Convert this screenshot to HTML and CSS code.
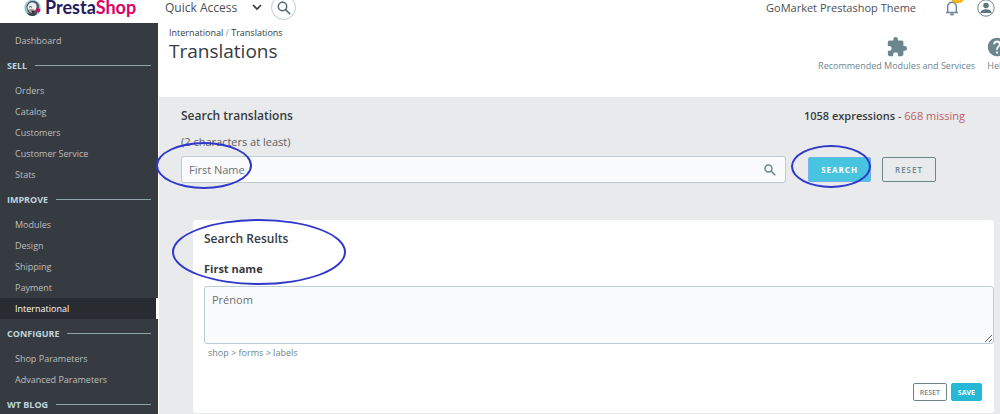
FILE: index.html
```html
<!DOCTYPE html>
<html lang="en">
<head>
    <meta charset="UTF-8">
    <meta name="viewport" content="width=device-width, initial-scale=1.0">
    <title>Translations - PrestaShop</title>
    <link rel="stylesheet" href="styles.css">
</head>
<body>

    <!-- Top bar -->
    <header class="topbar">
        <a href="#" class="logo">
            <svg width="17" height="18" viewBox="0 0 17 18">
                <circle cx="8.5" cy="9" r="8.2" fill="#8fc4d3"/>
                <path d="M2.500 8C3 3 7 1.500 10 2c3 .5 5 3 5 6l-2 6-6 2-3-3z" fill="#50535c"/>
                <path d="M3.500 8C4 4 7 3 9.500 3.500 12 4 13 6 12.500 9c-.5 2-2 3-4 3-3 0-5-1-5-4z" fill="#eceff1"/>
                <path d="M5 8.500c1-1.200 2-1.200 3 0" fill="none" stroke="#33353d"/>
                <path d="M4.500 10.500c2-1.500 5-1 7 1l-3 2.500c-2 0-4-1-4-3.500z" fill="#b9a093"/>
                <path d="M7 11.500l4 .5-2 2.500z" fill="#24262e"/>
                <path d="M13 8.500l3.500 2-1.500 3.500-3-2.500z" fill="#df0067"/>
                <path d="M3 14c3 1 8 1 10-.5 0 2-2 3.500-4.500 3.500S4 16 3 14z" fill="#3b3d46"/>
            </svg>
            <span class="logo-text">Presta<span class="logo-pink">Shop</span></span>
        </a>
        <button class="quick-access">
            Quick Access
            <svg width="10" height="7" viewBox="0 0 10 7" fill="none" stroke="#363a41" stroke-width="1.600"><path d="M1 1l4 4 4-4"/></svg>
        </button>
        <button class="round-search" aria-label="Search">
            <svg width="14" height="14" viewBox="0 0 14 14" fill="none" stroke="#4e6a74" stroke-width="1.500"><circle cx="5.500" cy="5.500" r="4.200"/><path d="M8.600 8.600l4.600 4.600"/></svg>
        </button>
        <a href="#" class="shop-name">GoMarket Prestashop Theme</a>
        <button class="bell" aria-label="Notifications">
            <svg width="14" height="17" viewBox="0 0 14 17" fill="none" stroke="#6c868e" stroke-width="1.400"><path d="M1 13.500h12M2.700 13V7.500a4.300 4.300 0 0 1 8.600 0V13"/><path d="M5.300 15.400h3.400" stroke-width="2"/></svg>
            <span class="badge">17</span>
        </button>
        <button class="user" aria-label="Account">
            <svg width="18" height="18" viewBox="0 0 18 18"><circle cx="9" cy="9" r="8.200" fill="#fff" stroke="#6c868e"/><circle cx="9" cy="6.500" r="2.800" fill="#5c7780"/><path d="M3.500 14c0-3 3.500-3.700 5.500-3.700s5.500.7 5.500 3.700z" fill="#5c7780"/></svg>
        </button>
    </header>

    <div class="layout">

        <!-- Sidebar -->
        <nav class="sidebar">
            <a href="#">Dashboard</a>
            <h2>SELL</h2>
            <a href="#">Orders</a>
            <a href="#">Catalog</a>
            <a href="#">Customers</a>
            <a href="#">Customer Service</a>
            <a href="#">Stats</a>
            <h2>IMPROVE</h2>
            <a href="#">Modules</a>
            <a href="#">Design</a>
            <a href="#">Shipping</a>
            <a href="#">Payment</a>
            <a href="#" class="active">International</a>
            <h2>CONFIGURE</h2>
            <a href="#">Shop Parameters</a>
            <a href="#">Advanced Parameters</a>
            <h2>WT BLOG</h2>
        </nav>

        <div class="page">
            <div class="page-head">
                <div>
                    <div class="breadcrumb"><a href="#">International</a> <span>/</span> <a href="#">Translations</a></div>
                    <h1>Translations</h1>
                </div>
                <div class="toolbar">
                    <a href="#">
                        <svg width="22" height="22" viewBox="0 0 24 24" fill="#6c868e"><path d="M20.500 11H19V7c0-1.100-.9-2-2-2h-4V3.500a2.500 2.500 0 0 0-5 0V5H4c-1.100 0-2 .9-2 2v3.800h1.500a2.700 2.700 0 0 1 0 5.400H2V20c0 1.100.9 2 2 2h3.800v-1.500a2.700 2.700 0 0 1 5.400 0V22H17c1.100 0 2-.9 2-2v-4h1.500a2.500 2.500 0 0 0 0-5z"/></svg>
                        Recommended Modules and Services
                    </a>
                    <a href="#">
                        <svg width="22" height="22" viewBox="0 0 24 24" fill="#6c868e"><path d="M12 2C6.480 2 2 6.480 2 12s4.480 10 10 10 10-4.480 10-10S17.520 2 12 2zm1 17h-2v-2h2v2zm2.070-7.750l-.9.920C13.450 12.900 13 13.500 13 15h-2v-.5c0-1.100.450-2.100 1.170-2.830l1.240-1.260c.37-.36.590-.86.590-1.410a2 2 0 0 0-4 0H8a4 4 0 0 1 8 0c0 .880-.36 1.680-.93 2.250z"/></svg>
                        Help
                    </a>
                </div>
            </div>

            <main class="content">
                <div class="summary">
                    <h3>Search translations</h3>
                    <p><b>1058 expressions</b> - <span class="missing">668 missing</span></p>
                </div>

                <!-- Search form -->
                <form class="search-form">
                    <label for="search">(2 characters at least)</label>
                    <div class="search-row">
                        <div class="search-box">
                            <input type="text" id="search" value="First Name">
                            <svg width="12" height="12" viewBox="0 0 12 12" fill="none" stroke="#6c868e" stroke-width="1.500"><circle cx="4.500" cy="4.500" r="3.500"/><path d="M7 7l4.300 4.300"/></svg>
                            <span class="mark mark-input"></span>
                        </div>
                        <div class="search-action">
                            <button type="button" class="btn btn-search">SEARCH</button>
                            <span class="mark mark-button"></span>
                        </div>
                        <button type="reset" class="btn btn-outline">RESET</button>
                    </div>
                </form>

                <!-- Results -->
                <section class="card">
                    <h3>Search Results</h3>
                    <label for="translation">First name</label>
                    <textarea id="translation">Prénom</textarea>
                    <p class="domain">shop &gt; forms &gt; labels</p>
                    <div class="card-actions">
                        <button class="btn btn-outline btn-small">RESET</button>
                        <button class="btn btn-save btn-small">SAVE</button>
                    </div>
                    <span class="mark mark-results"></span>
                </section>
            </main>
        </div>
    </div>

</body>
</html>
```
FILE: styles.css
```css
* {
    box-sizing: border-box;
}
body {
    margin: 0;
    height: 100vh;
    display: flex;
    flex-direction: column;
    overflow: hidden;
    font-family: "Open Sans", "Noto Sans", sans-serif;
    font-size: 12px;
    color: #363a41;
    background: #e9eaec;
}
h1, h2, h3, p {
    margin: 0;
}
a {
    color: inherit;
    text-decoration: none;
}
button, input, textarea {
    font-family: inherit;
    color: inherit;
}
button {
    padding: 0;
    border: none;
    background: none;
    cursor: pointer;
}
svg {
    display: block;
    flex: none;
}

/* Top bar */
.topbar {
    height: 23px;
    flex: none;
    display: flex;
    align-items: center;
    padding: 0 5px 8px 24px;
    background: white;
}
.logo {
    width: 141px;
    display: flex;
    align-items: center;
    gap: 4px;
}
.logo-text {
    font-family: Lato, sans-serif;
    font-size: 18px;
    font-weight: bold;
    line-height: 15px;
    color: #251b5b;
}
.logo-pink {
    color: #df0067;
}
.quick-access {
    display: flex;
    align-items: center;
    gap: 15px;
    font-size: 12px;
    color: #4b5056;
}
.round-search {
    width: 25px;
    height: 25px;
    flex: none;
    display: flex;
    align-items: center;
    justify-content: center;
    margin-left: 9px;
    border: 1px solid #bbcdd2;
    border-radius: 50%;
}
.shop-name {
    margin-left: auto;
    font-size: 11px;
    color: #4b5056;
}
.bell {
    position: relative;
    margin: 0 18px 0 29px;
}
.badge {
    position: absolute;
    top: -7px;
    left: 6px;
    padding: 0 2px;
    border-radius: 6px;
    background: #fab000;
    color: white;
    font-size: 8px;
    line-height: 11px;
}

.layout {
    flex: 1;
    min-height: 0;
    display: flex;
}

/* Sidebar */
.sidebar {
    width: 158px;
    flex: none;
    padding-top: 7px;
    background: #363a41;
    overflow: hidden;
}
.sidebar a {
    display: block;
    padding-left: 15px;
    font-size: 9px;
    line-height: 21px;
    color: #bebebe;
}
.sidebar a.active {
    background: #282b30;
    border-right: 2px solid white;
    color: white;
}
.sidebar h2 {
    display: flex;
    align-items: center;
    gap: 8px;
    padding: 0 7px;
    font-size: 9px;
    line-height: 29px;
    color: #bfd5dc;
}
.sidebar h2::after {
    content: "";
    flex: 1;
    height: 1px;
    background: #8fa3ab;
}

/* Page */
.page {
    flex: 1;
    min-width: 0;
    border-left: 1px solid white;
}
.page-head {
    height: 74px;
    display: flex;
    justify-content: space-between;
    padding-left: 10px;
    background: white;
}
.breadcrumb {
    padding-top: 4px;
    font-size: 9px;
    line-height: 12px;
}
.breadcrumb span {
    color: #9ba5a9;
}
h1 {
    font-size: 19px;
    font-weight: normal;
    line-height: 24px;
}
.toolbar {
    display: flex;
    gap: 11px;
    margin-right: -8px;
    padding-top: 13px;
}
.toolbar a {
    display: flex;
    flex-direction: column;
    align-items: center;
    font-size: 9px;
    line-height: 16px;
    color: #6c868e;
}
.content {
    padding: 10px 6px 0 22px;
}
.summary {
    display: flex;
    justify-content: space-between;
    padding-right: 29px;
    font-size: 11px;
    line-height: 18px;
}
.summary b {
    font-weight: 600;
}
h3 {
    font-size: 12px;
    font-weight: 600;
    line-height: 18px;
}
.missing {
    color: #c05c67;
}

/* Search form */
.search-form {
    padding: 8px 58px 0 0;
}
.search-form label {
    font-size: 11px;
    line-height: 18px;
    color: #5b6066;
}
.search-row {
    display: flex;
    align-items: center;
    margin-top: 5px;
}
.search-box {
    position: relative;
    flex: 1;
    height: 27px;
    display: flex;
    align-items: center;
    margin-right: 22px;
    padding-right: 9px;
    border: 1px solid #bbcdd2;
    border-radius: 3px;
    background: #fafbfc;
}
.search-box input {
    flex: 1;
    min-width: 0;
    padding: 0 7px;
    border: none;
    outline: none;
    background: none;
    font-size: 11px;
    color: #6b7075;
}
.search-action {
    position: relative;
    margin-right: 11px;
}
.btn {
    display: block;
    height: 25px;
    padding: 0 12px;
    border: 1px solid;
    border-radius: 2px;
    font-size: 8px;
    font-weight: 600;
    letter-spacing: 1px;
}
.btn-search {
    border-color: #6db4ee;
    background: #46c4e0;
    color: white;
    font-weight: bold;
}
.btn-outline {
    border-color: #6c868e;
    color: #6c868e;
}
.btn-small {
    height: 18px;
    padding: 0 6px;
    font-size: 7px;
    letter-spacing: 0;
}
.btn-save {
    border-color: #25b9d7;
    background: #25b9d7;
    color: white;
    font-weight: bold;
}

/* Results card */
.card {
    position: relative;
    margin: 37px 0 0 12px;
    padding: 10px 0 12px 11px;
    border-radius: 3px;
    background: white;
}
.card label {
    display: block;
    margin: 12px 0 8px;
    font-size: 11px;
    font-weight: bold;
    line-height: 18px;
}
.card textarea {
    display: block;
    width: 100%;
    height: 58px;
    padding: 5px 7px;
    border: 1px solid #bbcdd2;
    border-radius: 3px;
    background: #fafbfc;
    font-size: 11px;
    color: #6b7075;
}
.domain {
    padding: 2px 4px;
    font-size: 9px;
    line-height: 14px;
    color: #6c868e;
}
.card-actions {
    display: flex;
    justify-content: flex-end;
    gap: 4px;
    margin: 21px 12px 0 0;
}

/* Hand-drawn style highlights over the page */
.mark {
    position: absolute;
    border: 2px solid #3038cc;
    border-radius: 50%;
    pointer-events: none;
}
.mark-input {
    top: -15px;
    left: -26px;
    width: 96px;
    height: 47px;
}
.mark-button {
    top: -12px;
    left: -17px;
    width: 80px;
    height: 43px;
}
.mark-results {
    top: -1px;
    left: -21px;
    width: 174px;
    height: 66px;
}
```
